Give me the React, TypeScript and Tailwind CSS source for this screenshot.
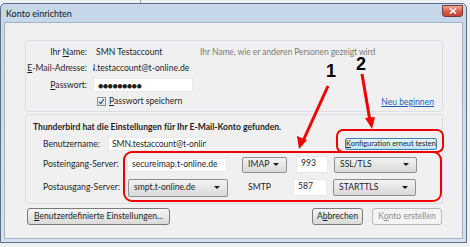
import type { ReactNode } from "react";

const ui = "font-['Lato',sans-serif] text-[8.6px] leading-none text-[#1e1e1e] whitespace-nowrap";

function Combo({ width, height, children }: { width: string; height: string; children: ReactNode }) {
  return (
    <div
      className={`${width} ${height} flex shrink-0 items-center justify-between rounded-[2px] border border-[#8e8f8f] bg-linear-to-b from-[#f3f3f3] to-[#d9d9d9] pl-[5px] pr-[7px]`}
    >
      <span>{children}</span>
      <span className="h-0 w-0 border-x-[3px] border-t-[3px] border-x-transparent border-t-[#1b1b1b]" />
    </div>
  );
}

function Field({ className, children }: { className: string; children?: ReactNode }) {
  return (
    <div className={`${className} flex shrink-0 overflow-hidden border border-[#e6eaee] bg-white pl-[4px]`}>
      {children}
    </div>
  );
}

function Button({ className, children }: { className: string; children: ReactNode }) {
  return (
    <div
      className={`${className} flex shrink-0 items-center justify-center rounded-[3px] border border-[#7a7a7a] bg-linear-to-b from-[#f6f6f6] to-[#dadada]`}
    >
      {children}
    </div>
  );
}

export default function App() {
  return (
    <div className={`${ui} relative h-[247px] w-[470px] overflow-hidden bg-[#eef1f4]`}>
      <div className="flex h-[3px]">
        <div className="ml-[140px] w-px bg-[#9aa3ad]" />
      </div>
      <div className="flex h-[240px] w-[467px] flex-col rounded-t-[5px] border border-[#5d6f86] bg-linear-to-b from-[#c6d7ea] to-[#d5e2f0]">
        {/* title bar */}
        <div className="flex h-[18px] items-start justify-between">
          <span className="ml-[5px] mt-[5px] text-[9px] text-[#111]">Konto einrichten</span>
          <div className="mr-[3px] mt-px flex h-[12px] w-[21px] items-center justify-center rounded-b-[3px] border border-[#7a3a33] bg-linear-to-b from-[#e9a99c] via-[#d7604e] to-[#c44533]">
            <svg width="8" height="6" viewBox="0 0 8 6">
              <path d="M1 0.5 L7 5.5 M7 0.5 L1 5.5" stroke="#fff" strokeWidth="1.6" />
            </svg>
          </div>
        </div>

        {/* client area */}
        <div className="ml-[3px] flex h-[217px] w-[459px] flex-col border border-[#a3b2c4] bg-[#f0f0f0]">
          {/* group 1 */}
          <div className="ml-[20px] mt-[17px] flex h-[72px] w-[418px] flex-col rounded-[3px] border border-[#d9dfe4]">
            <div className="mt-[3px] flex h-[16px] items-center">
              <span className="w-[61px] text-right">
                Ihr <u>N</u>ame:
              </span>
              <span className="ml-[9px] w-[104px]">SMN Testaccount</span>
              <span className="tracking-[-0.1px] text-[#7b7b7b]">Ihr Name, wie er anderen Personen gezeigt wird</span>
            </div>
            <div className="flex h-[17px] items-center">
              <span className="w-[61px] text-right">
                <u>E</u>-Mail-Adresse:
              </span>
              <div className="ml-[6px] flex w-[101px] overflow-hidden">
                <span className="-ml-[17px]">SMN.testaccount@t-online.de</span>
              </div>
            </div>
            <div className="flex h-[16px] items-center">
              <span className="w-[61px] text-right">
                <u>P</u>asswort:
              </span>
              <Field className="ml-[6px] h-[14px] w-[100px] items-center">
                <span className="text-[9px] tracking-[-0.6px]">●●●●●●●●●</span>
              </Field>
            </div>
            <div className="flex h-[16px] items-center">
              <span className="w-[61px]" />
              <div className="ml-[10px] flex h-[9px] w-[9px] items-center justify-center border border-[#8e8f8f] bg-linear-to-b from-[#f1f5fb] to-[#dce4ee]">
                <svg width="7" height="7" viewBox="0 0 7 7">
                  <path d="M1 3.8 L2.8 5.6 L6 1" fill="none" stroke="#3b5a86" strokeWidth="1.3" />
                </svg>
              </div>
              <span className="ml-[3px]">
                <u>P</u>asswort speichern
              </span>
              <span className="ml-auto mr-[8px] mt-[2px] text-[#1a5fb4] underline">Neu beginnen</span>
            </div>
          </div>

          {/* group 2 */}
          <div className="ml-[20px] mt-[2px] flex h-[90px] w-[418px] flex-col rounded-[3px] border border-[#d9dfe4]">
            <div className="ml-[7px] mt-[6px] flex h-[13px] items-center font-bold">
              Thunderbird hat die Einstellungen für Ihr E-Mail-Konto gefunden.
            </div>
            <div className="mt-[3px] flex h-[14px] items-center">
              <span className="ml-[17px] w-[65px]">Benutzername:</span>
              <Field className="h-[14px] w-[99px] items-center !pl-[3px] tracking-[-0.1px]">SMN.testaccount@t-onlin</Field>
              <div className="ml-[138px] flex h-[12px] w-[92px] items-center justify-center rounded-[2px] border border-[#3c7fb1] bg-linear-to-b from-[#eaf6fd] to-[#bfe4fa] text-[7.4px]">
                <span>
                  <u>K</u>onfiguration erneut testen
                </span>
              </div>
            </div>
            <div className="mt-[5px] flex h-[17px] items-center">
              <span className="ml-[17px] w-[84px]">Posteingang-Server:</span>
              <Field className="h-[14px] w-[100px] items-center">secureimap.t-online.de</Field>
              <div className="ml-[15px]">
                <Combo width="w-[45px]" height="h-[16px]">IMAP</Combo>
              </div>
              <Field className="ml-[9px] h-[17px] w-[32px] items-start pt-[2px]">993</Field>
              <div className="ml-[6px]">
                <Combo width="w-[83px]" height="h-[16px]">SSL/TLS</Combo>
              </div>
            </div>
            <div className="mt-[5px] flex h-[19px] items-center">
              <span className="ml-[17px] w-[85px]">Postausgang-Server:</span>
              <Combo width="w-[100px]" height="h-[18px]">smpt.t-online.de</Combo>
              <span className="ml-[20px] w-[45px]">SMTP</span>
              <Field className="h-[17px] w-[34px] items-start pt-[2px]">587</Field>
              <div className="ml-[6px]">
                <Combo width="w-[83px]" height="h-[17px]">STARTTLS</Combo>
              </div>
            </div>
          </div>

          {/* buttons */}
          <div className="mt-[4px] flex h-[17px]">
            <Button className="ml-[22px] w-[143px]">
              <span>
                <u>B</u>enutzerdefinierte Einstellungen...
              </span>
            </Button>
            <Button className="ml-auto w-[51px]">
              <span>
                A<u>b</u>brechen
              </span>
            </Button>
            <div className="ml-[9px] mr-[20px] flex w-[70px] items-center justify-center rounded-[3px] border border-[#b5b9bc] bg-[#f4f4f4] text-[#8c8c8c]">
              <span>
                K<u>o</u>nto erstellen
              </span>
            </div>
          </div>
        </div>
      </div>

      {/* annotations */}
      <svg className="pointer-events-none absolute left-0 top-0" width="470" height="247" viewBox="0 0 470 247">
        <rect x="337" y="130" width="106" height="22" rx="6" fill="none" stroke="#f00000" strokeWidth="2" />
        <rect x="124" y="152" width="317" height="49" rx="8" fill="none" stroke="#f00000" strokeWidth="2" />
        <path d="M328 86 L303 141" stroke="#f00000" strokeWidth="3" />
        <path d="M299 149 L297 136 L307 140 Z" fill="#f00000" />
        <path d="M362 74 L370 121" stroke="#f00000" strokeWidth="3" />
        <path d="M372 129 L365 118 L375 117 Z" fill="#f00000" />
      </svg>
      <span className="absolute left-[326px] top-[62px] font-['Liberation_Sans',sans-serif] text-[18px] font-bold text-black">1</span>
      <span className="absolute left-[356px] top-[55px] font-['Liberation_Sans',sans-serif] text-[18px] font-bold text-black">2</span>
    </div>
  );
}
